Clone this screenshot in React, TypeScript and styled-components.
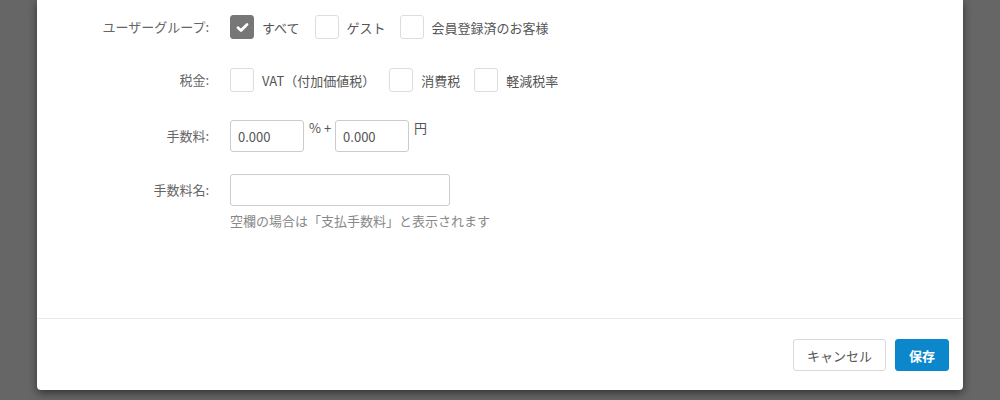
import React, { useState } from "react";
import styled, { createGlobalStyle } from "styled-components";

const GlobalStyle = createGlobalStyle`
  html, body {
    margin: 0;
    padding: 0;
    background: #666666;
    height: 400px;
    overflow: hidden;
  }
  body {
    font-family: "Noto Sans CJK JP", "Noto Sans", "Liberation Sans", sans-serif;
    font-size: 13px;
    color: #555555;
  }
`;

const Modal = styled.div`
  margin: 0 37px;
  height: 390px;
  background: #ffffff;
  border-radius: 0 0 4px 4px;
  box-shadow: 0 3px 9px rgba(0, 0, 0, 0.5);
  display: flex;
  flex-direction: column;
`;

const ModalBody = styled.div`
  flex: 1;
  padding-top: 15px;
  border-bottom: 1px solid #e9e9e9;
  display: flex;
  flex-direction: column;
`;

const FormRow = styled.div<{ $mb: number }>`
  display: grid;
  grid-template-columns: 172px 1fr;
  column-gap: 21px;
  margin-bottom: ${({ $mb }) => $mb}px;
`;

const Label = styled.div<{ $h: number }>`
  text-align: right;
  line-height: ${({ $h }) => $h}px;
  color: #666666;
  white-space: nowrap;
`;

const Options = styled.div`
  display: flex;
  align-items: center;
`;

const OptionItem = styled.label<{ $gap: number }>`
  display: flex;
  align-items: center;
  gap: 8px;
  margin-right: ${({ $gap }) => $gap}px;
  cursor: pointer;
  color: #555555;
`;

const Box = styled.span<{ $checked: boolean }>`
  width: 24px;
  height: 24px;
  box-sizing: border-box;
  border-radius: 3px;
  border: 1px solid ${({ $checked }) => ($checked ? "#777777" : "#dddddd")};
  background: ${({ $checked }) => ($checked ? "#777777" : "#ffffff")};
  display: flex;
  align-items: center;
  justify-content: center;
`;

const FeeGroup = styled.div`
  display: flex;
  align-items: flex-start;
`;

const Unit = styled.span`
  font-size: 13px;
  line-height: 14px;
  padding: 1px 4px 0 5px;
  color: #555555;
`;

const TextInput = styled.input<{ $w: number }>`
  width: ${({ $w }) => $w}px;
  height: 32px;
  box-sizing: border-box;
  border: 1px solid #cccccc;
  border-radius: 3px;
  padding: 0 7px;
  font-family: inherit;
  font-size: 13px;
  color: #555555;
  outline: none;
`;

const FieldCol = styled.div`
  display: flex;
  flex-direction: column;
`;

const Help = styled.div`
  margin-top: 6px;
  color: #888888;
  line-height: 18px;
`;

const ModalFooter = styled.div`
  display: flex;
  justify-content: flex-end;
  gap: 9px;
  padding: 20px 14px 19px;
`;

const Button = styled.button<{ $primary?: boolean; $w: number }>`
  width: ${({ $w }) => $w}px;
  height: 32px;
  box-sizing: border-box;
  padding: 0;
  border-radius: 3px;
  font-family: inherit;
  font-size: 13px;
  cursor: pointer;
  border: 1px solid ${({ $primary }) => ($primary ? "#0d87cb" : "#d9d9d9")};
  background: ${({ $primary }) => ($primary ? "#0d87cb" : "#ffffff")};
  color: ${({ $primary }) => ($primary ? "#ffffff" : "#555555")};
  font-weight: ${({ $primary }) => ($primary ? 700 : 400)};
`;

const Check = () => (
  <svg width="13" height="11" viewBox="0 0 13 11">
    <path d="M2 5.8 L5 8.5 L11 2.5" fill="none" stroke="#ffffff" strokeWidth="2.8" strokeLinecap="round" strokeLinejoin="round" />
  </svg>
);

const Option: React.FC<{ text: string; checked: boolean; gap: number; onToggle: () => void }> = ({ text, checked, gap, onToggle }) => (
  <OptionItem $gap={gap} onClick={onToggle}>
    <Box $checked={checked}>{checked && <Check />}</Box>
    {text}
  </OptionItem>
);

const App: React.FC = () => {
  const [groups, setGroups] = useState<boolean[]>([true, false, false]);
  const [taxes, setTaxes] = useState<boolean[]>([false, false, false]);

  const toggle = (list: boolean[], set: (v: boolean[]) => void, i: number) =>
    set(list.map((v, idx) => (idx === i ? !v : v)));

  return (
    <>
      <GlobalStyle />
      <Modal>
        <ModalBody>
          <FormRow $mb={29}>
            <Label $h={24}>ユーザーグループ:</Label>
            <Options>
              <Option text="すべて" checked={groups[0]} gap={15} onToggle={() => toggle(groups, setGroups, 0)} />
              <Option text="ゲスト" checked={groups[1]} gap={14} onToggle={() => toggle(groups, setGroups, 1)} />
              <Option text="会員登録済のお客様" checked={groups[2]} gap={0} onToggle={() => toggle(groups, setGroups, 2)} />
            </Options>
          </FormRow>
          <FormRow $mb={28}>
            <Label $h={24}>税金:</Label>
            <Options>
              <Option text="VAT（付加価値税）" checked={taxes[0]} gap={14} onToggle={() => toggle(taxes, setTaxes, 0)} />
              <Option text="消費税" checked={taxes[1]} gap={14} onToggle={() => toggle(taxes, setTaxes, 1)} />
              <Option text="軽減税率" checked={taxes[2]} gap={0} onToggle={() => toggle(taxes, setTaxes, 2)} />
            </Options>
          </FormRow>
          <FormRow $mb={22}>
            <Label $h={32}>手数料:</Label>
            <FeeGroup>
              <TextInput $w={74} defaultValue="0.000" />
              <Unit>% +</Unit>
              <TextInput $w={74} defaultValue="0.000" />
              <Unit>円</Unit>
            </FeeGroup>
          </FormRow>
          <FormRow $mb={0}>
            <Label $h={32}>手数料名:</Label>
            <FieldCol>
              <TextInput $w={220} />
              <Help>空欄の場合は「支払手数料」と表示されます</Help>
            </FieldCol>
          </FormRow>
        </ModalBody>
        <ModalFooter>
          <Button $w={93}>キャンセル</Button>
          <Button $primary $w={54}>保存</Button>
        </ModalFooter>
      </Modal>
    </>
  );
};

export default App;
